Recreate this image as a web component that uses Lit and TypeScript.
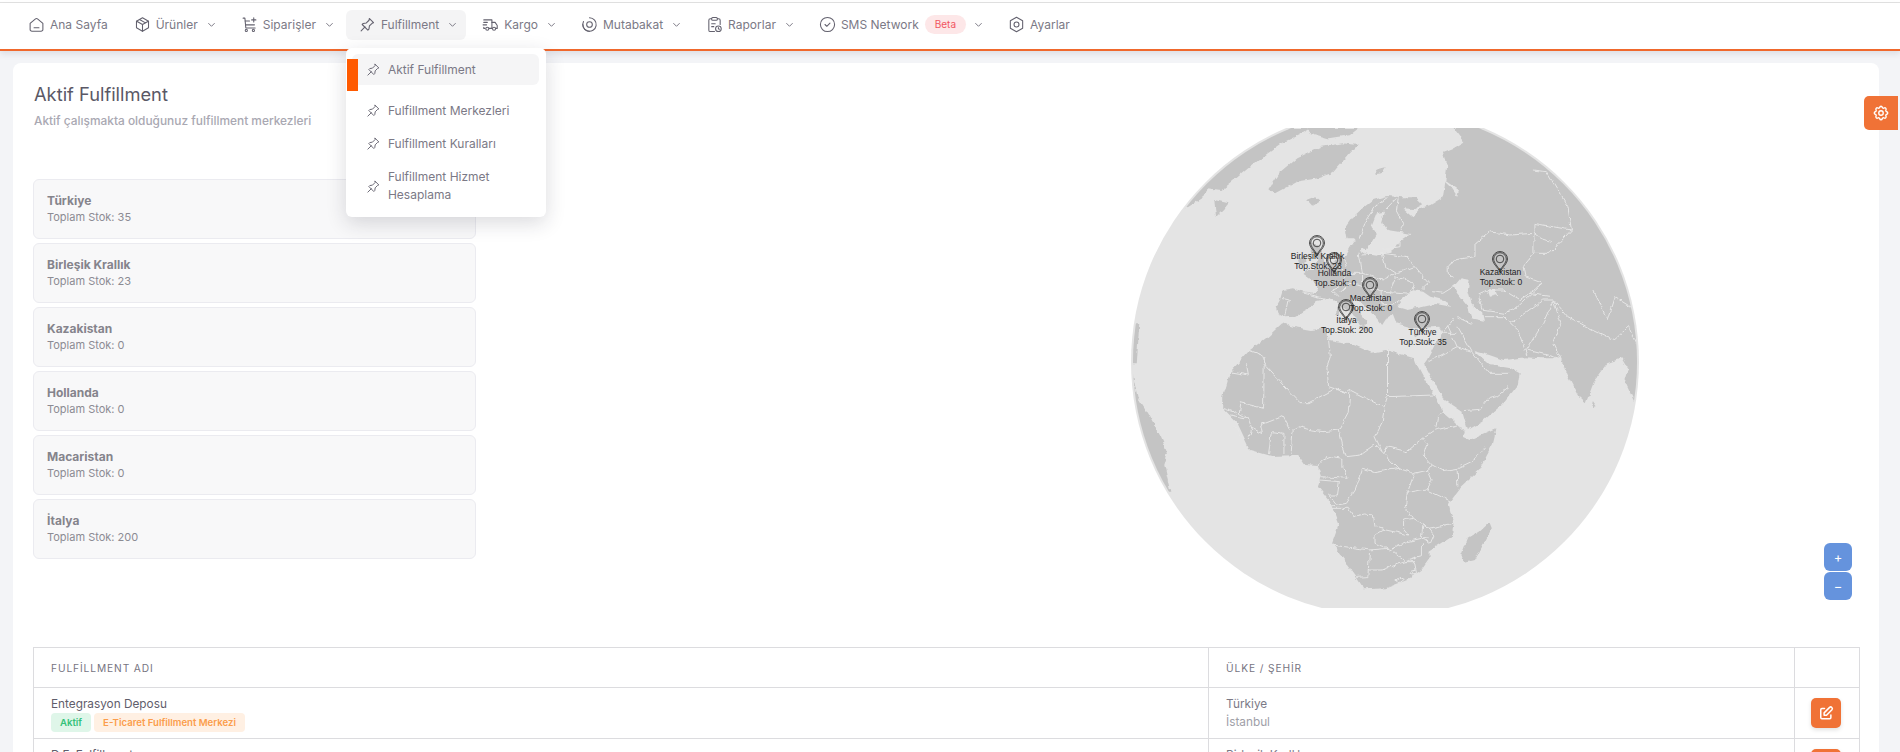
import { LitElement, html, css, svg } from 'lit';
import { customElement } from 'lit/decorators.js';

const stroke = (body: unknown, size = 17, sw = 1.5) => html`<svg class="ico" width=${size} height=${size} viewBox="0 0 24 24" fill="none" stroke="currentColor" stroke-width=${sw} stroke-linecap="round" stroke-linejoin="round">${body}</svg>`;

const icons: Record<string, unknown> = {
  home: svg`<path d="M3 10.5 10.6 4a2.2 2.2 0 0 1 2.8 0L21 10.5V19a2.5 2.5 0 0 1-2.5 2.5h-13A2.5 2.5 0 0 1 3 19Z"/><path d="M8.5 16.5h7"/>`,
  box: svg`<path d="m12 2.5 8.5 4.8v9.4L12 21.5l-8.500-4.800V7.300Z"/><path d="m3.800 7.300 8.200 4.700 8.200-4.700M12 12v9.500M7.800 4.900l8.400 4.800"/>`,
  cart: svg`<path d="M3 3h2.500L6.800 17H20"/><circle cx="7.500" cy="20.300" r="1.500"/><circle cx="17.500" cy="20.300" r="1.500"/><path d="M6 7h6M6.500 12.500H19M18 2.500v6M15 5.500h6"/>`,
  pin: svg`<path d="m14.500 3.500 6 6-2 .800-3.800 3.800-.700 4.400-1.500 1.500-8-8 1.500-1.500 4.400-.700 3.800-3.800Z"/><path d="M8.500 15.500 3 21"/>`,
  truck: svg`<path d="M2.500 5.500h11.500v12h-4M2.500 9h5M1.500 12.500h5M2.500 16v1.500h1.500"/><path d="M14 9h4.500l3 4.500v4h-2"/><circle cx="7.500" cy="18" r="2.200"/><circle cx="17" cy="18" r="2.200"/>`,
  eye: svg`<path d="M12 2.500a9.500 9.500 0 1 1-8.500 5.200"/><circle cx="12" cy="12" r="4"/><path d="M12 21.500A9.500 9.500 0 0 1 2.500 12"/>`,
  report: svg`<path d="M8 4H6a2 2 0 0 0-2 2v14a2 2 0 0 0 2 2h6"/><path d="M16 4h2a2 2 0 0 1 2 2v6"/><rect x="8" y="2" width="8" height="4" rx="1.500"/><path d="M8 11h5M8 15h3"/><circle cx="17.500" cy="18" r="4"/><path d="M17.500 16.200V18l1.300.800"/>`,
  check: svg`<circle cx="12" cy="12" r="10"/><path d="m8.500 12 2.500 2.500 4.500-4.500"/>`,
  hex: svg`<path d="m12 1.800 8.700 5v10.400L12 22.200l-8.700-5V6.800Z"/><circle cx="12" cy="12" r="3.500"/>`,
  gear: svg`<path d="M10.325 4.317c.426-1.756 2.924-1.756 3.350 0a1.724 1.724 0 0 0 2.573 1.066c1.543-.940 3.310.826 2.370 2.370a1.724 1.724 0 0 0 1.065 2.572c1.756.426 1.756 2.924 0 3.350a1.724 1.724 0 0 0-1.066 2.573c.940 1.543-.826 3.310-2.370 2.370a1.724 1.724 0 0 0-2.572 1.065c-.426 1.756-2.924 1.756-3.350 0a1.724 1.724 0 0 0-2.573-1.066c-1.543.940-3.310-.826-2.370-2.370a1.724 1.724 0 0 0-1.065-2.572c-1.756-.426-1.756-2.924 0-3.350a1.724 1.724 0 0 0 1.066-2.573c-.940-1.543.826-3.310 2.370-2.370c1 .608 2.296.070 2.572-1.065z"/><circle cx="12" cy="12" r="3"/>`,
};

const chevron = html`<svg class="chev" width="9" height="9" viewBox="0 0 10 10" fill="none" stroke="currentColor" stroke-width="1.100"><path d="m1.500 3.500 3.500 3.500 3.500-3.500"/></svg>`;

const navItems = [
  { icon: 'home', label: 'Ana Sayfa' },
  { icon: 'box', label: 'Ürünler', more: true },
  { icon: 'cart', label: 'Siparişler', more: true },
  { icon: 'pin', label: 'Fulfillment', more: true, open: true },
  { icon: 'truck', label: 'Kargo', more: true },
  { icon: 'eye', label: 'Mutabakat', more: true },
  { icon: 'report', label: 'Raporlar', more: true },
  { icon: 'check', label: 'SMS Network', more: true, beta: true },
  { icon: 'hex', label: 'Ayarlar' },
];

const stocks = [
  ['Türkiye', 35],
  ['Birleşik Krallık', 23],
  ['Kazakistan', 0],
  ['Hollanda', 0],
  ['Macaristan', 0],
  ['İtalya', 200],
];

// page coordinates minus the svg origin (1100,128)
const pins = [
  { x: 217, y: 115, name: 'Birleşik Krallık', stock: 23 },
  { x: 234, y: 132, name: 'Hollanda', stock: 0 },
  { x: 270, y: 157, name: 'Macaristan', stock: 0 },
  { x: 246, y: 179, name: 'İtalya', stock: 200 },
  { x: 322, y: 191, name: 'Türkiye', stock: 35 },
  { x: 400, y: 131, name: 'Kazakistan', stock: 0 },
];

// land and borders are traced in a 2.8x / 3x grid over the map area
const land = [
  '520,622 497,610 492,590 505,565 512,540 540,535 575,548 600,552 612,535 595,510 570,492 580,480 610,480 640,465 665,450 690,435 700,415 712,395 735,392 728,420 745,432 775,437 812,425 830,410 838,395 870,372 835,365 805,360 790,335 798,305 775,310 760,350 775,372 760,400 745,418 722,412 712,385 690,385 685,355 705,325 735,295 765,270 805,258 845,262 885,262 905,283 875,300 850,298 875,322 895,295 925,285 960,262 965,230 972,170 960,128 985,118 1020,95 990,54 1100,40 1620,300 1620,880 1510,880 1498,880 1470,815 1480,780 1460,745 1420,760 1385,810 1360,880 1340,860 1310,800 1290,745 1240,745 1190,742 1130,750 1090,735 1045,722 1090,765 1125,770 1150,775 1175,790 1170,825 1130,880 1070,935 1030,960 1015,905 960,865 915,775 905,765 915,750 940,700 960,670 950,650 880,655 830,640 820,612 805,620 790,645 760,605 745,590 720,570 700,560 720,600 748,635 735,650 720,625 690,600 665,578 640,563 610,570 590,590 565,605 545,620',
  '510,640 470,680 420,720 365,785 345,860 345,895 385,940 420,1020 480,1038 555,1035 575,1065 610,1068 620,1100 610,1130 650,1185 670,1240 650,1300 690,1360 720,1405 740,1438 800,1435 860,1410 900,1380 920,1350 920,1325 985,1280 990,1240 975,1180 1010,1130 1060,1080 1100,1000 1110,955 1035,990 1015,980 1020,960 960,905 940,860 910,810 885,760 880,745 800,720 760,728 700,700 640,690 635,655 590,660 540,650',
  '1090,1235 1097,1255 1075,1300 1050,1350 1020,1358 1012,1335 1030,1285 1060,1265',
  '60,600 95,810 105,860 135,910 170,980 190,1030 180,1065 197,1145 120,1145 60,900',
  '90,640 110,640 103,760 85,760',
  '215,315 240,295 290,260 300,235 340,240 370,215 420,170 470,130 510,100 560,75 590,54 300,54 180,300',
  '325,320 320,270 360,280 345,300',
  '470,240 500,190 550,145 620,110 680,100 722,105 700,130 650,190 610,205 550,215 490,250',
  '580,270 600,262 615,275 595,288',
  '570,54 725,54 700,75 640,85 590,70',
  '770,180 800,172 790,190 772,192',
  '590,400 610,405 625,440 632,465 585,475 610,450 590,425',
  '552,447 575,435 578,455 556,466',
  '662,590 672,590 672,620 662,618',
  '725,648 750,650 745,665',
  '880,672 900,672 885,682',
  '1380,870 1390,885 1385,895 1378,885',
];

const seas = [
  '845,570 870,540 905,545 925,560 960,570 985,590 940,582 900,592 860,600 830,590',
  '990,530 1010,505 1035,510 1030,540 1040,580 1070,610 1075,632 1040,625 1030,590 1000,550',
  '1085,540 1105,535 1112,555 1092,560',
  '900,180 920,195 915,240 905,225',
  '950,200 1005,240 1000,258 985,235',
];

const borders = [
  // Europe
  '565,548 630,565', '510,565 530,570 520,620', '655,455 690,490 670,530 650,540 670,560', '680,440 690,470',
  '725,425 735,490', '690,490 735,490 790,510 830,490', '735,435 790,430 800,470 830,490', '790,420 840,410 840,390',
  '790,430 860,440 880,470 830,490', '880,470 920,520 900,540', '830,500 880,520 870,550 810,545',
  '735,490 735,530 790,545 810,545 830,500', '790,545 790,585 830,580 870,550', '670,550 700,520 735,530',
  '835,265 830,300 850,340 840,360', '805,262 770,290 745,330 725,390', '798,300 830,265',
  '930,545 960,550 990,530',
  // Central Asia
  '975,470 990,450 1050,440 1050,400 1090,365 1150,375 1215,370 1235,385 1265,395', '975,470 975,490 990,505',
  '1060,555 1090,540 1130,540 1175,570 1240,520 1190,500 1185,470 1215,430', '1215,430 1260,430 1320,360 1310,290 1250,185 1215,180',
  '1215,340 1215,430', '1215,340 1320,360', '1000,620 1040,640', '1075,620 1130,620 1170,660 1195,735',
  '1060,555 1070,600 1130,610 1170,590 1240,520', '1150,640 1240,570 1270,570 1240,640 1195,720 1290,745',
  '1270,570 1290,640 1270,700 1290,745', '1270,570 1310,620 1380,660 1440,690 1480,650 1500,700', '1380,540 1400,580 1420,630 1440,560 1500,600',
  '1200,550 1265,560', '990,625 975,650 960,668', '975,650 1000,710', '1000,650 1040,725', '960,670 1000,670',
  '920,755 1000,710 1040,725', '1040,725 1090,790 1150,790', '1015,902 1065,898 1090,865 1110,860 1145,830',
  // Africa
  '415,720 455,735 465,770 530,845 560,878 585,878 660,835 690,848 700,840 795,892', '360,785 415,795 410,760',
  '460,740 458,895 395,878', '640,690 645,740 635,770 640,830 690,848', '805,720 805,860', '795,892 805,860', '805,860 940,855',
  '700,840 695,910 670,960 680,1010 690,1040 730,1035 770,1005 790,1025 835,1075 880,1090 920,1080 930,1065 905,1035 915,1000 905,985 860,1025 805,1010 795,1030',
  '795,895 790,940 770,980 790,1025', '905,985 940,960 1000,945 1020,965', '940,955 945,920 960,905',
  '1080,1010 1050,1050 1000,1075 960,1082 930,1065', '1000,1075 1002,1130', '920,1085 930,1110 915,1140 985,1175',
  '670,960 625,965 590,960 555,950 540,965 535,1032', '515,970 515,1032', '480,965 472,1032', '480,965 515,970',
  '425,955 455,970 450,945 510,920 530,960', '395,878 390,910 415,925 425,955 415,990', '365,915 415,925', '375,945 395,980', '345,895 385,910',
  '735,1078 770,1088 835,1075', '735,1078 715,1140 690,1180 650,1188', '880,1090 860,1150 855,1190 875,1225 850,1230 850,1255 865,1275 800,1260 770,1250 765,1215 740,1212 710,1220 695,1195 650,1195',
  '610,1068 625,1050 650,1040 680,1045 680,1075 695,1105 620,1100', '615,1110 670,1115 665,1155 640,1155 660,1182',
  '650,1305 755,1320 810,1315 770,1300 770,1275 795,1260', '810,1320 860,1295 920,1280', '820,1325 855,1355 900,1340 900,1300',
  '755,1320 750,1400 720,1402', '750,1380 790,1380 855,1355 880,1355 885,1380', '915,1140 860,1150', '875,1225 920,1255 990,1240',
  '920,1255 905,1240 900,1280 925,1300 935,1275 920,1255', '828,1410 840,1402 852,1408 840,1418 828,1410', '870,1385 885,1380 886,1390 872,1392 870,1385',
];

@customElement('app-root')
export class AppRoot extends LitElement {
  static styles = css`
    * { box-sizing: border-box; }

    :host {
      display: block;
      position: relative;
      height: 752px;
      overflow: hidden;
      background: #f3f4f7;
      font-family: Inter, "Noto Sans", sans-serif;
      color: #5f5d6b;
    }

    .topline {
      height: 3px;
      background: #fff;
      border-bottom: 1px solid #e2e2e2;
    }

    .nav {
      display: flex;
      align-items: flex-start;
      gap: 3px;
      height: 48px;
      padding: 7px 0 0 15px;
      background: #fff;
      border-bottom: 2px solid #f0682c;
      box-shadow: 0 3px 6px rgba(40, 40, 60, 0.1);
      position: relative;
      z-index: 5;
    }

    .nav-item {
      display: flex;
      align-items: center;
      height: 30px;
      padding: 0 9px 2px 13px;
      border-radius: 6px;
      position: relative;
      font-size: 12px;
      color: #7b7986;
      white-space: nowrap;
    }

    .nav-item:first-child { padding-right: 10px; }
    .nav-item.open { background: #f4f4f5; }
    .ico { flex: none; color: #63616e; }
    .nav-item .ico { margin-right: 5px; }
    .chev { margin-left: 9px; color: #7b7986; flex: none; }

    .beta {
      margin-left: 6px;
      height: 19px;
      padding: 0 10px;
      border-radius: 10px;
      background: #fde7e8;
      color: #f1555f;
      font-size: 10px;
      display: flex;
      align-items: center;
    }

    .beta + .chev { margin-left: 8px; }

    .drop {
      position: absolute;
      top: 38px;
      left: 0;
      width: 200px;
      height: 169px;
      padding: 6px 7px 0 6px;
      background: #fff;
      border-radius: 6px;
      box-shadow: 0 6px 20px rgba(30, 30, 50, 0.16);
      white-space: normal;
      font-size: 12px;
    }

    .drop-item {
      display: flex;
      align-items: center;
      gap: 7px;
      height: 33px;
      padding-left: 14px;
      border-radius: 6px;
      line-height: 18px;
    }

    .nav-item .drop-item .ico { margin: 0; }
    .drop-item.active { height: 31px; background: #f5f5f6; margin-bottom: 9px; }
    .drop-item.tall { height: 44px; margin-top: 4px; }

    .bar {
      position: absolute;
      left: 1px;
      top: 11px;
      width: 11px;
      height: 32px;
      background: #ff5a00;
    }

    .card {
      margin: 12px 21px 0 13px;
      padding: 20px 20px 0;
      height: 800px;
      background: #fff;
      border-radius: 8px;
    }

    h1 {
      margin: 0 0 0 1px;
      font-size: 18.300px;
      line-height: 22px;
      font-weight: 400;
      color: #5a5866;
    }

    .sub {
      margin: 6px 0 0 1px;
      height: 17px;
      font-size: 11.900px;
      line-height: 19px;
      font-weight: 500;
      color: #a9a8b2;
    }

    .row {
      display: flex;
      position: relative;
    }

    .list {
      flex: none;
      width: 443px;
      padding-top: 51px;
      display: flex;
      flex-direction: column;
      gap: 4px;
    }

    .stock {
      height: 60px;
      padding: 12px 13px 0;
      background: #f8f8f9;
      border: 1px solid #ebebf0;
      border-radius: 6px;
    }

    .stock b {
      display: block;
      font-size: 12px;
      line-height: 17px;
      font-weight: 700;
      color: #85848c;
    }

    .stock span {
      display: block;
      font-size: 11px;
      line-height: 16px;
      color: #8c8b93;
    }

    .map {
      flex: none;
      margin-left: 624px;
      display: block;
    }

    .map text {
      font-family: "Liberation Sans", sans-serif;
      font-size: 8.500px;
      fill: #222;
      text-anchor: middle;
    }

    .zoom {
      position: absolute;
      top: 415px;
      right: 7px;
      display: flex;
      flex-direction: column;
      gap: 1px;
    }

    .zoom span {
      width: 28px;
      height: 28px;
      border-radius: 6px;
      background: #6593dd;
      color: #fff;
      display: flex;
      align-items: center;
      justify-content: center;
      font-size: 13px;
    }

    table {
      margin-top: 39px;
      width: 1826px;
      border-collapse: collapse;
      table-layout: fixed;
    }

    th, td {
      border: 1px solid #dcdcdf;
      padding: 0 17px;
      text-align: left;
      font-weight: 400;
    }

    th {
      height: 40px;
      font-size: 10.200px;
      letter-spacing: 0.900px;
      color: #76747f;
    }

    td { height: 51px; font-size: 11.800px; vertical-align: top; padding-top: 7px; }
    .name { line-height: 18px; color: #5f5d6b; }
    .tags { display: flex; gap: 3px; }

    .tag {
      height: 19px;
      padding: 0 9px;
      border-radius: 4px;
      font-size: 9.600px;
      font-weight: 600;
      line-height: 19px;
    }

    .tag.green { background: #dff6e9; color: #35c27a; }
    .tag.orange { background: #fff0e3; color: #fb9d4b; }
    .city { line-height: 18px; color: #7b7986; }
    .city i { display: block; font-style: normal; color: #a0a0a8; }
    td.act { padding: 10px 0 0 16px; }

    .edit {
      width: 30px;
      height: 30px;
      border-radius: 5px;
      background: #f07236;
      display: flex;
      align-items: center;
      justify-content: center;
      box-shadow: 0 2px 4px rgba(0, 0, 0, 0.12);
    }

    .edit .ico { color: #fff; }

    .gear {
      position: absolute;
      top: 96px;
      right: 2px;
      width: 34px;
      height: 34px;
      border-radius: 5px 0 0 5px;
      background: #f07236;
      display: flex;
      align-items: center;
      justify-content: center;
      z-index: 3;
    }

    .gear .ico { color: #fff; }
  `;

  private renderMap() {
    return html`
      <svg class="map" width="560" height="480" viewBox="0 0 560 480">
        <defs>
          <clipPath id="globe"><circle cx="285" cy="234" r="252"></circle></clipPath>
          <filter id="rough" filterUnits="userSpaceOnUse" x="0" y="0" width="1700" height="1600" color-interpolation-filters="sRGB">
            <feTurbulence type="fractalNoise" baseFrequency="0.045" numOctaves="3" seed="4"></feTurbulence>
            <feDisplacementMap in="SourceGraphic" scale="14" xChannelSelector="R" yChannelSelector="G"></feDisplacementMap>
          </filter>
        </defs>
        <circle cx="285" cy="234" r="254" fill="#e4e4e4"></circle>
        <g clip-path="url(#globe)">
          <g transform="translate(0,-18) scale(0.35714,0.33333)">
            <g filter="url(#rough)">
              ${land.map((p) => svg`<polygon points=${p} fill="#c4c4c4"></polygon>`)}
              ${seas.map((p) => svg`<polygon points=${p} fill="#e4e4e4"></polygon>`)}
              ${borders.map((p) => svg`<polyline points=${p} fill="none" stroke="#e6e6e6" stroke-width="1" vector-effect="non-scaling-stroke"></polyline>`)}
            </g>
          </g>
        </g>
        ${pins.map((p) => svg`
          <g transform="translate(${p.x},${p.y})" fill="none" stroke="#2a2a2a" stroke-width="0.800">
            <path d="M0 13C-2.500 8-7.500 4.500-7.500 0a7.500 7.500 0 0 1 15 0C7.500 4.500 2.500 8 0 13Z"></path>
            <path d="M0 11.500C-2 7.500-6.300 4-6.300 0a6.300 6.300 0 0 1 12.600 0C6.300 4 2 7.500 0 11.500Z"></path>
            <circle r="3.800"></circle>
          </g>
          <text x=${p.x + 0.500} y=${p.y + 16}>${p.name}</text>
          <text x=${p.x + 1} y=${p.y + 26}>Top.Stok: ${p.stock}</text>
        `)}
      </svg>
    `;
  }

  render() {
    return html`
      <div class="topline"></div>
      <nav class="nav">
        ${navItems.map((n) => html`
          <div class="nav-item ${n.open ? 'open' : ''}">
            ${stroke(icons[n.icon])}
            <span>${n.label}</span>
            ${n.beta ? html`<span class="beta">Beta</span>` : ''}
            ${n.more ? chevron : ''}
            ${n.open ? html`
              <div class="drop">
                <div class="bar"></div>
                <div class="drop-item active">${stroke(icons.pin, 15)}<span>Aktif Fulfillment</span></div>
                <div class="drop-item">${stroke(icons.pin, 15)}<span>Fulfillment Merkezleri</span></div>
                <div class="drop-item">${stroke(icons.pin, 15)}<span>Fulfillment Kuralları</span></div>
                <div class="drop-item tall">${stroke(icons.pin, 15)}<span>Fulfillment Hizmet<br />Hesaplama</span></div>
              </div>
            ` : ''}
          </div>
        `)}
      </nav>

      <div class="gear">${stroke(icons.gear, 18, 1.8)}</div>

      <main class="card">
        <h1>Aktif Fulfillment</h1>
        <div class="sub">Aktif çalışmakta olduğunuz fulfillment merkezleri</div>
        <div class="row">
          <div class="list">
            ${stocks.map(([name, stock]) => html`
              <div class="stock"><b>${name}</b><span>Toplam Stok: ${stock}</span></div>
            `)}
          </div>
          ${this.renderMap()}
          <div class="zoom"><span>+</span><span>−</span></div>
        </div>

        <table>
          <colgroup><col style="width:1175px" /><col style="width:586px" /><col style="width:65px" /></colgroup>
          <thead>
            <tr><th>FULFİLLMENT ADI</th><th>ÜLKE / ŞEHİR</th><th></th></tr>
          </thead>
          <tbody>
            <tr>
              <td>
                <div class="name">Entegrasyon Deposu</div>
                <div class="tags"><span class="tag green">Aktif</span><span class="tag orange">E-Ticaret Fulfillment Merkezi</span></div>
              </td>
              <td><div class="city">Türkiye<i>İstanbul</i></div></td>
              <td class="act"><div class="edit">${stroke(svg`<path d="M10 6H6.500A1.500 1.500 0 0 0 5 7.500V18a1.500 1.500 0 0 0 1.500 1.500H17a1.500 1.500 0 0 0 1.500-1.500v-3.500"/><path d="M9.500 15v-3.200l7.300-7.300a2.200 2.200 0 0 1 3.100 3.100L12.700 15Z"/>`, 18, 2)}</div></td>
            </tr>
            <tr>
              <td><div class="name">D.F. Fulfillment</div></td>
              <td><div class="city">Birleşik Krallık</div></td>
              <td class="act"><div class="edit"></div></td>
            </tr>
          </tbody>
        </table>
      </main>
    `;
  }
}
